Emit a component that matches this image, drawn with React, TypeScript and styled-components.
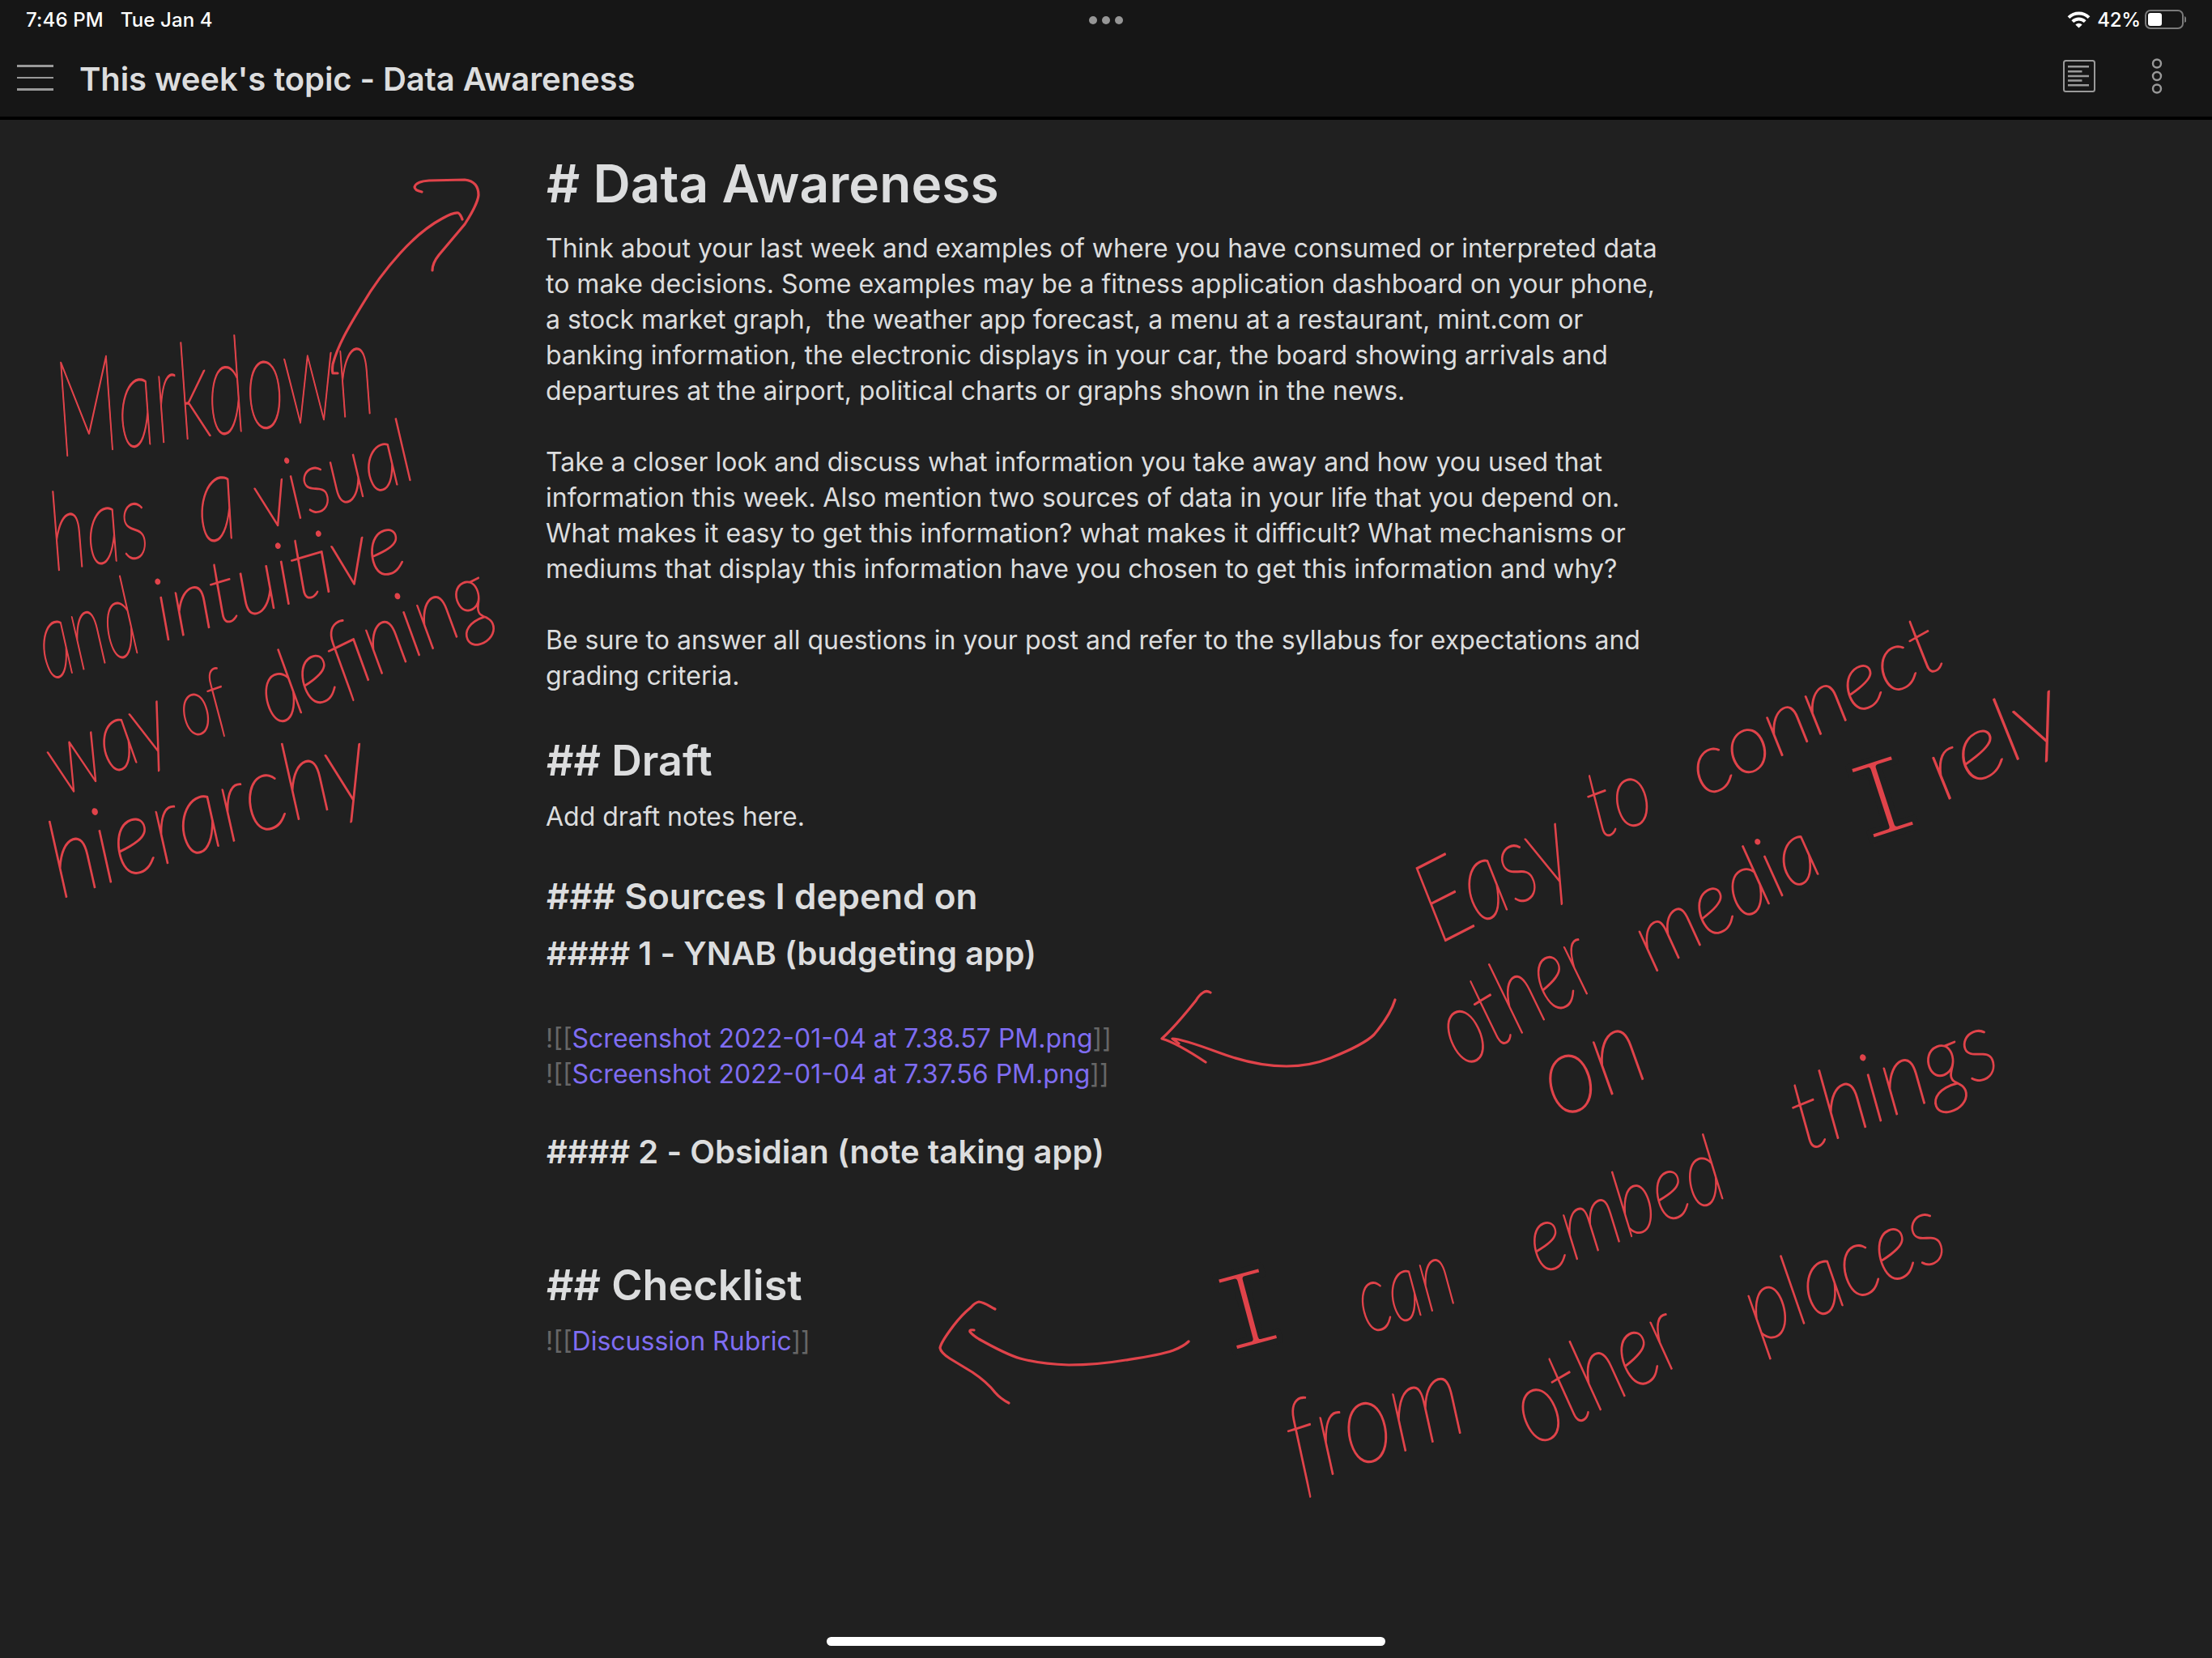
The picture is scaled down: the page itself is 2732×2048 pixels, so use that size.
import React from "react";
import styled, { createGlobalStyle, css } from "styled-components";

const GlobalStyle = createGlobalStyle`
  body {
    margin: 0;
    background: #202020;
  }
`;

const Screen = styled.div`
  position: relative;
  display: flex;
  flex-direction: column;
  width: 2732px;
  height: 2048px;
  overflow: hidden;
  background: #202020;
  color: #dcddde;
  font-family: Inter, "Liberation Sans", sans-serif;
`;

const Header = styled.header`
  display: flex;
  flex-direction: column;
  height: 144px;
  background: #161616;
  border-bottom: 4px solid #000;
`;

const StatusBar = styled.div`
  display: grid;
  grid-template-columns: 1fr auto 1fr;
  align-items: center;
  height: 48px;
  padding: 0 32px 0 32px;
  color: #fff;
  font-size: 24px;
  font-weight: 500;
`;

const Clock = styled.div<{ $spacing: number }>`
  letter-spacing: ${(p) => p.$spacing}px;
  white-space: nowrap;
`;

const StatusLeft = styled.div`
  display: flex;
  gap: 21px;
`;

const Dots = styled.div`
  display: flex;
  gap: 6px;
  margin-top: 2px;
`;

const Dot = styled.i`
  width: 10px;
  height: 10px;
  border-radius: 50%;
  background: #969696;
`;

const StatusRight = styled.div`
  display: flex;
  align-items: center;
  justify-content: flex-end;
`;

const Percent = styled.span`
  margin: 0 5px 0 8px;
  letter-spacing: -0.2px;
`;

const TitleBar = styled.div`
  display: flex;
  align-items: center;
  height: 96px;
  padding: 0 61px 0 21px;
`;

const MenuLines = styled.div`
  display: flex;
  flex-direction: column;
  gap: 12px;
  width: 45px;
  margin-right: 32px;
`;

const MenuLine = styled.i`
  height: 2.5px;
  background: #999;
`;

const Title = styled.h1`
  flex: 1;
  margin: 3px 0 0;
  font-size: 40px;
  font-weight: 600;
  line-height: 48px;
  letter-spacing: -0.1px;
`;

const Actions = styled.div`
  display: flex;
  align-items: center;
  gap: 69px;
  margin-top: -4px;
`;

const Note = styled.main`
  display: flex;
  flex-direction: column;
  width: 1400px;
  margin-left: 674px;
  padding-top: 40px;
`;

const Heading = styled.h2<{ $size: number; $line: number; $top?: number; $bottom?: number }>`
  margin: ${(p) => p.$top ?? 0}px 0 ${(p) => p.$bottom ?? 0}px;
  padding-left: 1px;
  font-size: ${(p) => p.$size}px;
  line-height: ${(p) => p.$line}px;
  font-weight: 600;
  letter-spacing: 0.06px;
  white-space: pre;
`;

const Line = styled.div`
  min-height: 44px;
  font-size: 32px;
  line-height: 44px;
  white-space: pre;
`;

const Bracket = styled.span`
  color: #666;
`;

const Link = styled.span`
  color: #7f6df2;
`;

const HomeIndicator = styled.div`
  position: absolute;
  left: 1021px;
  bottom: 15px;
  width: 690px;
  height: 11px;
  border-radius: 6px;
  background: #fff;
`;

const InkLayer = styled.svg`
  position: absolute;
  inset: 0;
`;

const Stroke = styled.path`
  fill: none;
  stroke: #e0434a;
  stroke-width: 3.2;
  stroke-linecap: round;
  stroke-linejoin: round;
`;

const InkWord = styled.text<{ $serif?: boolean }>`
  fill: #e0434a;
  stroke: #e0434a;
  stroke-width: 1.7;
  stroke-linejoin: round;
  font-family: Lato, "Open Sans", sans-serif;
  font-weight: 100;
  font-style: italic;
  ${(p) =>
    p.$serif &&
    css`
      font-family: "Liberation Mono", monospace;
      font-weight: 400;
      font-style: normal;
      stroke: #202020;
      stroke-width: 7;
    `}
`;

type Word = { t: string; x: number; y: number; a: number; w: number; s: number; serif?: boolean };

const words: Word[] = [
  { t: "Markdown", x: 76, y: 564, a: -8, w: 396, s: 165 },
  { t: "has", x: 68, y: 705, a: -9, w: 122, s: 135 },
  { t: "a", x: 249, y: 670, a: -8, w: 50, s: 155 },
  { t: "visual", x: 327, y: 655, a: -19, w: 202, s: 108 },
  { t: "and", x: 60, y: 840, a: -17, w: 125, s: 135 },
  { t: "intuitive", x: 202, y: 792, a: -16.6, w: 318, s: 108 },
  { t: "way", x: 78, y: 984, a: -25, w: 155, s: 118 },
  { t: "of", x: 233, y: 912, a: -20, w: 60, s: 100 },
  { t: "defining", x: 338, y: 897, a: -26, w: 308, s: 115 },
  { t: "hierarchy", x: 76, y: 1110, a: -18.5, w: 410, s: 132 },
  { t: "Easy", x: 1778, y: 1166, a: -27, w: 195, s: 138 },
  { t: "to", x: 1975, y: 1036, a: -20, w: 78, s: 115 },
  { t: "connect", x: 2106, y: 986, a: -29, w: 345, s: 102 },
  { t: "other", x: 1806, y: 1320, a: -31, w: 205, s: 130 },
  { t: "media", x: 2042, y: 1202, a: -31, w: 250, s: 108 },
  { t: "I", x: 2299, y: 1043, a: -18, w: 86, s: 145, serif: true },
  { t: "rely", x: 2402, y: 990, a: -30, w: 180, s: 110 },
  { t: "on", x: 1926, y: 1383, a: -26, w: 130, s: 138 },
  { t: "I", x: 1512, y: 1674, a: -15, w: 86, s: 145, serif: true },
  { t: "can", x: 1690, y: 1648, a: -20, w: 122, s: 118 },
  { t: "embed", x: 1903, y: 1574, a: -22.6, w: 255, s: 115 },
  { t: "things", x: 2230, y: 1422, a: -22, w: 265, s: 120 },
  { t: "from", x: 1606, y: 1834, a: -18, w: 222, s: 145 },
  { t: "other", x: 1896, y: 1788, a: -30, w: 222, s: 128 },
  { t: "places", x: 2174, y: 1660, a: -25, w: 262, s: 122 },
];

const arrows = [
  "M417 461 L411 461 Q410 458 411 450 C417 427 430 405 447 377 C461 353 475 334 494 313 Q520 284 546 270 Q560 262 566 263 Q569 265 571 271",
  "M521 237 Q512 235 512 231 Q514 224 530 223 L574 222 Q591 224 591 241 Q590 252 574 277 L542 315 Q534 325 534 334",
  "M1495 1226 Q1490 1223 1486 1226 Q1481 1229 1477 1236 C1461 1256 1447 1272 1435 1283 Q1453 1288 1489 1312",
  "M1456 1289 L1448 1283 Q1459 1283 1505 1300 C1537 1312 1562 1317 1589 1317 C1613 1317 1628 1313 1643 1307 C1668 1297 1688 1287 1697 1278 C1708 1265 1718 1251 1723 1235",
  "M1229 1617 C1218 1611 1216 1609 1209 1608 Q1204 1609 1199 1615 Q1188 1624 1178 1637 C1172 1645 1162 1658 1161 1665 Q1162 1671 1173 1678 L1201 1695 Q1219 1707 1229 1720 Q1236 1728 1246 1733",
  "M1203 1643 Q1197 1642 1198 1645 Q1201 1649 1209 1654 C1225 1663 1246 1674 1260 1678 Q1285 1685 1320 1686 Q1355 1686 1390 1680 C1410 1677 1432 1674 1449 1668 Q1462 1663 1468 1657",
];

const paragraphs = [
  "Think about your last week and examples of where you have consumed or interpreted data",
  "to make decisions. Some examples may be a fitness application dashboard on your phone,",
  "a stock market graph,  the weather app forecast, a menu at a restaurant, mint.com or",
  "banking information, the electronic displays in your car, the board showing arrivals and",
  "departures at the airport, political charts or graphs shown in the news.",
  "",
  "Take a closer look and discuss what information you take away and how you used that",
  "information this week. Also mention two sources of data in your life that you depend on.",
  "What makes it easy to get this information? what makes it difficult? What mechanisms or",
  "mediums that display this information have you chosen to get this information and why?",
  "",
  "Be sure to answer all questions in your post and refer to the syllabus for expectations and",
  "grading criteria.",
  "",
];

const Embed = ({ name }: { name: string }) => (
  <Line>
    <Bracket>![[</Bracket>
    <Link>{name}</Link>
    <Bracket>]]</Bracket>
  </Line>
);

const WifiIcon = () => (
  <svg width="29" height="21" viewBox="0 0 29 21" fill="none" stroke="#fff" strokeWidth="4">
    <path d="M2 7.6a18 18 0 0 1 25 0" />
    <path d="M6.8 12.6a11.2 11.2 0 0 1 15.4 0" />
    <path d="M14.5 20.6l-4.2-4.2a6 6 0 0 1 8.4 0z" fill="#fff" stroke="none" />
  </svg>
);

const BatteryIcon = () => (
  <svg width="51" height="24" viewBox="0 0 51 24">
    <rect x="1" y="1" width="46" height="22" rx="6" fill="none" stroke="#7b7b7b" strokeWidth="2" />
    <rect x="4" y="4" width="17" height="16" rx="3" fill="#fff" />
    <path d="M49 8v8q2.500-1.300 2.500-4t-2.500-4z" fill="#7b7b7b" />
  </svg>
);

const PreviewIcon = () => (
  <svg width="40" height="40" viewBox="0 0 40 40" fill="none" stroke="#999" strokeWidth="2">
    <rect x="1" y="1" width="38" height="38" rx="2.500" />
    <path d="M6 8.300h26M6 14.300h17.500M6 20h26M6 25.500h17.500M6 31.300h26" strokeWidth="2.500" />
  </svg>
);

const MoreIcon = () => (
  <svg width="14" height="46" viewBox="0 0 14 46" fill="none" stroke="#999" strokeWidth="2.400">
    <circle cx="7" cy="7.500" r="5" />
    <circle cx="7" cy="23" r="5" />
    <circle cx="7" cy="38.500" r="5" />
  </svg>
);

export default function App() {
  return (
    <>
      <GlobalStyle />
      <Screen>
        <Header>
          <StatusBar>
            <StatusLeft>
              <Clock $spacing={0.15}>7:46 PM</Clock>
              <Clock $spacing={0.1}>Tue Jan 4</Clock>
            </StatusLeft>
            <Dots>
              <Dot />
              <Dot />
              <Dot />
            </Dots>
            <StatusRight>
              <WifiIcon />
              <Percent>42%</Percent>
              <BatteryIcon />
            </StatusRight>
          </StatusBar>
          <TitleBar>
            <MenuLines>
              <MenuLine />
              <MenuLine />
              <MenuLine />
            </MenuLines>
            <Title>This week's topic - Data Awareness</Title>
            <Actions>
              <PreviewIcon />
              <MoreIcon />
            </Actions>
          </TitleBar>
        </Header>
        <Note>
          <Heading $size={64} $line={78} $bottom={19}># Data Awareness</Heading>
          {paragraphs.map((line, i) => (
            <Line key={i}>{line}</Line>
          ))}
          <Heading $size={52} $line={78} $bottom={8}>## Draft</Heading>
          <Line>Add draft notes here.</Line>
          <Line />
          <Heading $size={44} $line={64}>### Sources I depend on</Heading>
          <Heading $size={40} $line={78}>#### 1 - YNAB (budgeting app)</Heading>
          <Line />
          <Embed name="Screenshot 2022-01-04 at 7.38.57 PM.png" />
          <Embed name="Screenshot 2022-01-04 at 7.37.56 PM.png" />
          <Line />
          <Heading $size={40} $line={60}>#### 2 - Obsidian (note taking app)</Heading>
          <Line />
          <Line />
          <Heading $size={52} $line={78} $top={8} $bottom={8}>## Checklist</Heading>
          <Embed name="Discussion Rubric" />
        </Note>
        <InkLayer width="2732" height="2048" viewBox="0 0 2732 2048">
          {arrows.map((d) => (
            <Stroke key={d} d={d} />
          ))}
          {words.map((w) => (
            <InkWord
              key={`${w.x}-${w.y}`}
              $serif={w.serif}
              fontSize={w.s}
              textLength={w.w}
              lengthAdjust="spacingAndGlyphs"
              transform={`translate(${w.x} ${w.y}) rotate(${w.a})`}
            >
              {w.t}
            </InkWord>
          ))}
        </InkLayer>
        <HomeIndicator />
      </Screen>
    </>
  );
}
